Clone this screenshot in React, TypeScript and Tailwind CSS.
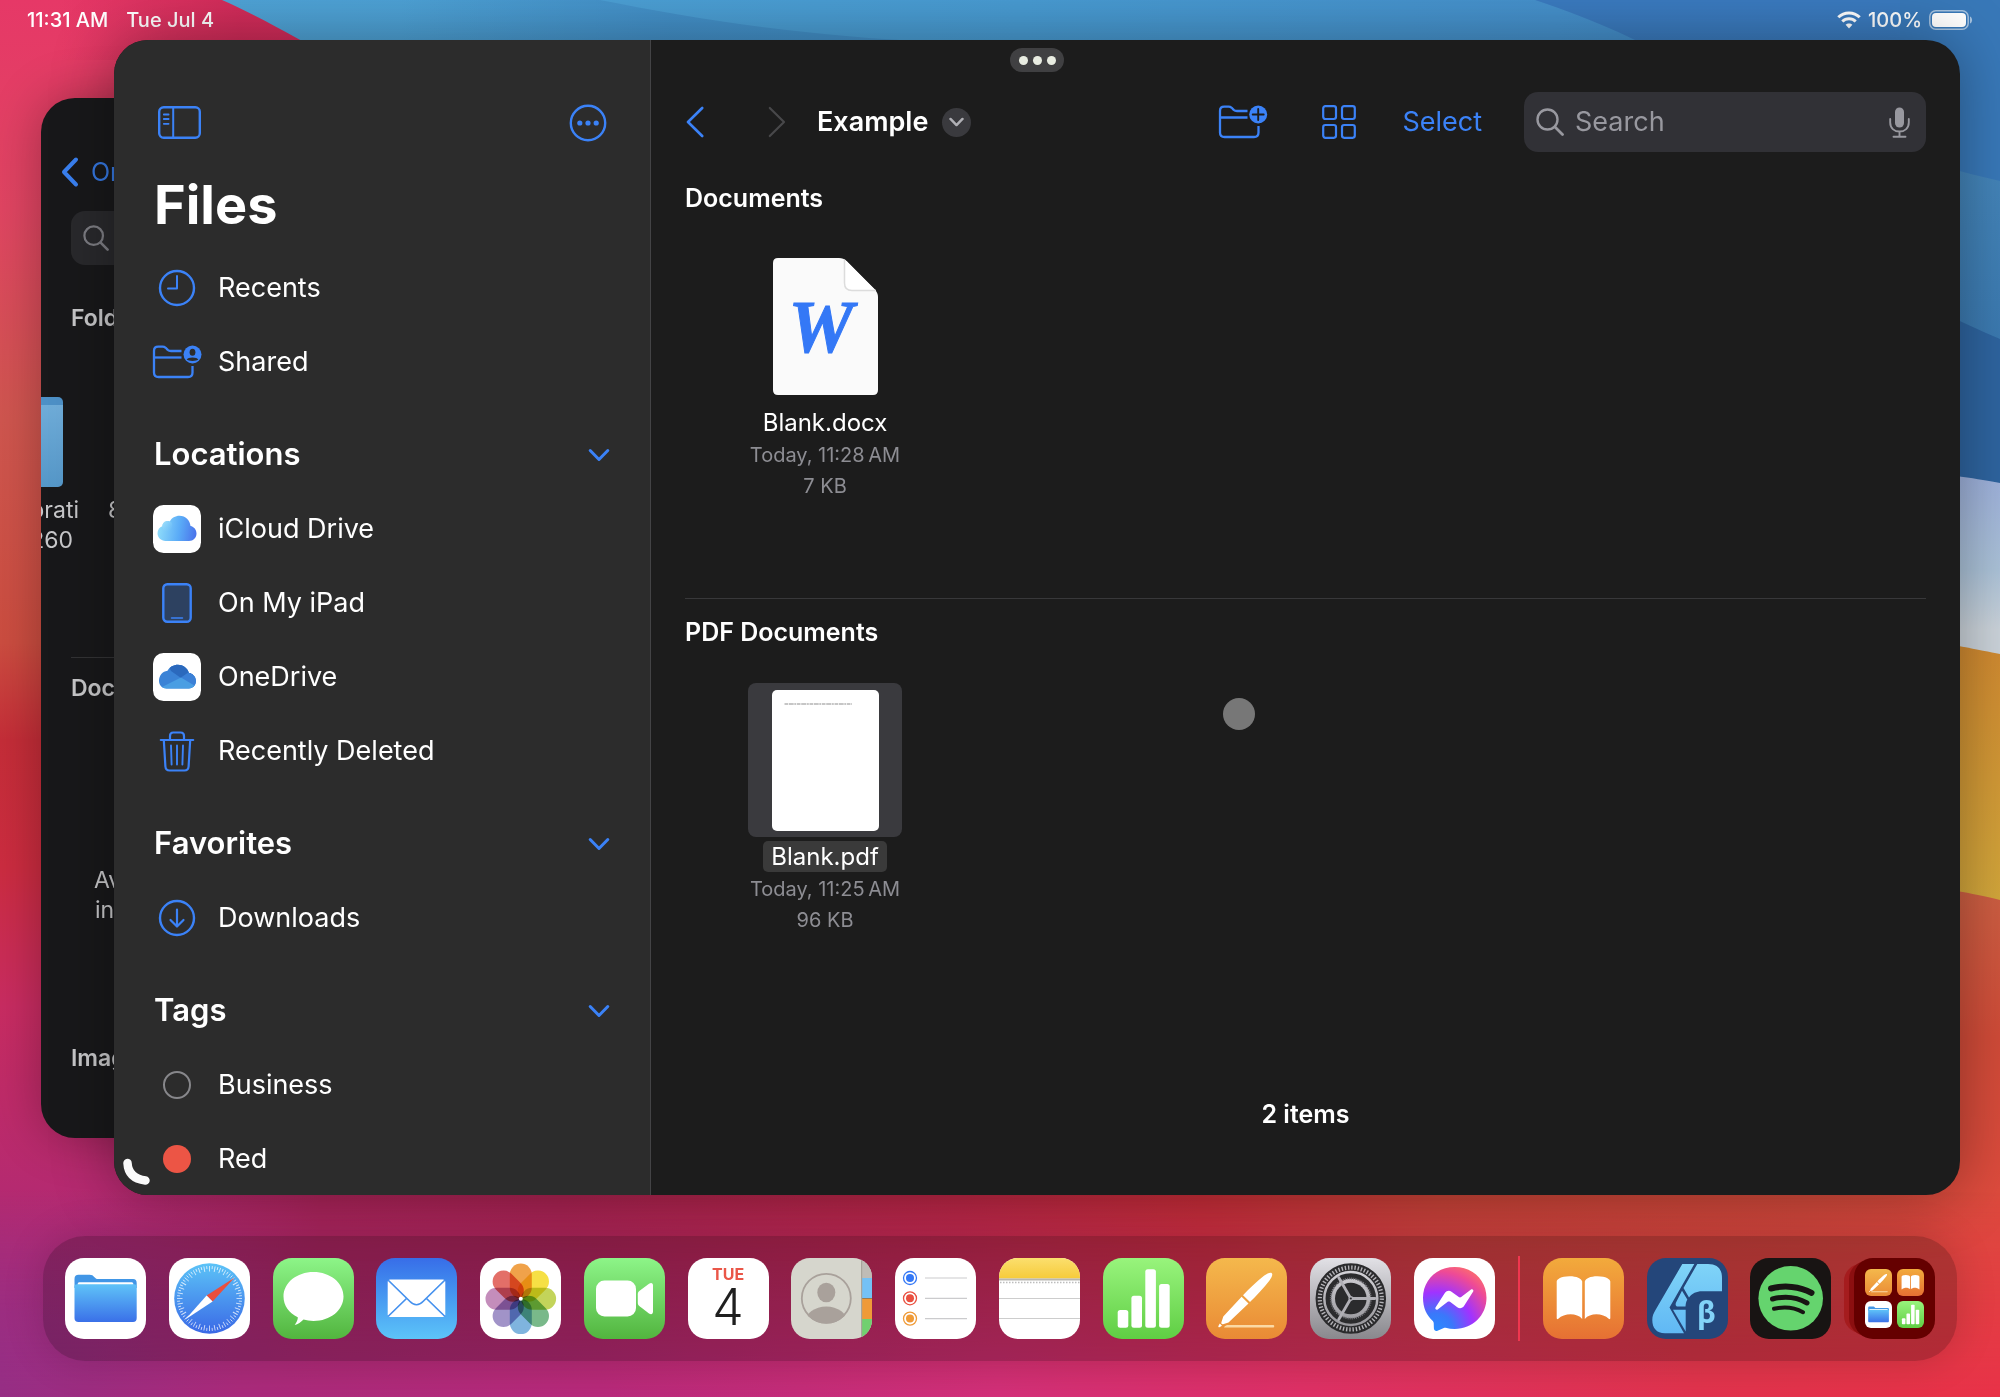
import type { ReactNode } from "react";

const BLUE = "#3b82f7";

/* ---------- Wallpaper ---------- */

function Wallpaper() {
  return (
    <svg
      className="absolute inset-0 h-full w-full"
      viewBox="0 0 2000 1397"
      preserveAspectRatio="none"
      aria-hidden="true"
    >
      <defs>
        <linearGradient id="wp-left" x1="0" y1="0" x2="0" y2="1">
          <stop offset="0" stopColor="#e63867" />
          <stop offset="0.15" stopColor="#e04562" />
          <stop offset="0.3" stopColor="#d0564f" />
          <stop offset="0.46" stopColor="#cc4d40" />
          <stop offset="0.53" stopColor="#c52d38" />
          <stop offset="0.62" stopColor="#cc2c40" />
          <stop offset="0.72" stopColor="#c92c62" />
          <stop offset="0.85" stopColor="#b52a70" />
          <stop offset="1" stopColor="#982e84" />
        </linearGradient>
        <linearGradient id="wp-rose" x1="60" y1="0" x2="240" y2="0" gradientUnits="userSpaceOnUse">
          <stop offset="0" stopColor="#cf2a58" stopOpacity="0" />
          <stop offset="1" stopColor="#cf2a58" stopOpacity="0.9" />
        </linearGradient>
        <linearGradient id="wp-mid" x1="0" y1="0" x2="1" y2="0">
          <stop offset="0" stopColor="#b52868" stopOpacity="0" />
          <stop offset="0.05" stopColor="#b52868" stopOpacity="0.1" />
          <stop offset="0.16" stopColor="#aa2458" />
          <stop offset="0.28" stopColor="#a8234f" />
          <stop offset="0.48" stopColor="#b82642" />
          <stop offset="0.6" stopColor="#c42d36" />
          <stop offset="0.72" stopColor="#c64436" />
          <stop offset="0.9" stopColor="#cf4a3a" />
          <stop offset="1" stopColor="#dd4b3d" />
        </linearGradient>
        <linearGradient id="wp-low" x1="0" y1="0" x2="1" y2="0">
          <stop offset="0" stopColor="#962e84" />
          <stop offset="0.12" stopColor="#aa2b7c" />
          <stop offset="0.3" stopColor="#b82a7c" />
          <stop offset="0.5" stopColor="#d3307a" />
          <stop offset="0.65" stopColor="#df3068" />
          <stop offset="0.85" stopColor="#e2324e" />
          <stop offset="1" stopColor="#e83248" />
        </linearGradient>
        <linearGradient id="wp-fade" x1="0" y1="0" x2="0" y2="1">
          <stop offset="0" stopColor="#000" />
          <stop offset="1" stopColor="#fff" />
        </linearGradient>
        <mask id="wp-mask">
          <rect x="0" y="1190" width="2000" height="207" fill="url(#wp-fade)" />
        </mask>
        <linearGradient id="wp-sky" x1="0" y1="0" x2="1" y2="0">
          <stop offset="0" stopColor="#4fa3d6" />
          <stop offset="0.45" stopColor="#489bd2" />
          <stop offset="0.75" stopColor="#4590cb" />
          <stop offset="1" stopColor="#3c83c2" />
        </linearGradient>
        <linearGradient id="wp-fold" x1="0" y1="0" x2="1" y2="0">
          <stop offset="0" stopColor="#3f89c2" stopOpacity="0" />
          <stop offset="0.5" stopColor="#3f89c2" stopOpacity="0.7" />
          <stop offset="1" stopColor="#3f89c2" stopOpacity="0.7" />
        </linearGradient>
        <linearGradient id="wp-deep" x1="0" y1="0" x2="0" y2="1">
          <stop offset="0" stopColor="#3a7abf" />
          <stop offset="0.4" stopColor="#3a7bbb" />
          <stop offset="1" stopColor="#2c63a0" />
        </linearGradient>
        <linearGradient id="wp-edge" x1="0" y1="0" x2="0" y2="1">
          <stop offset="0" stopColor="#4586ba" />
          <stop offset="1" stopColor="#336fa8" />
        </linearGradient>
        <linearGradient id="wp-white" x1="0" y1="0" x2="0" y2="1">
          <stop offset="0" stopColor="#9cafdb" />
          <stop offset="0.5" stopColor="#abc2d8" />
          <stop offset="0.8" stopColor="#cbd3da" />
        </linearGradient>
        <linearGradient id="wp-gold" x1="0" y1="0" x2="0" y2="1">
          <stop offset="0" stopColor="#cf8830" />
          <stop offset="1" stopColor="#d3a93c" />
        </linearGradient>
        <linearGradient id="wp-red" x1="0" y1="0" x2="0" y2="1">
          <stop offset="0" stopColor="#cc6043" />
          <stop offset="0.5" stopColor="#d04b38" />
          <stop offset="1" stopColor="#dd4b3d" />
        </linearGradient>
      </defs>
      <rect width="2000" height="1397" fill="url(#wp-left)" />
      <rect x="0" y="1190" width="2000" height="207" fill="url(#wp-mid)" />
      <rect x="0" y="1190" width="2000" height="207" fill="url(#wp-low)" mask="url(#wp-mask)" />
      <rect x="60" y="0" width="260" height="60" fill="url(#wp-rose)" />
      <path d="M222 0H2000V430H1000L340 62C300 40 255 14 222 0Z" fill="url(#wp-sky)" />
      <path d="M400 0H600C690 18 800 36 940 42H400Z" fill="url(#wp-fold)" />
      <path d="M1535 0C1600 22 1640 40 1690 70L1900 120L2000 240V0Z" fill="url(#wp-deep)" />
      <path d="M1900 0H2000V190H1900Z" fill="#3878b8" />
      <path d="M1900 150C1930 163 1960 172 2000 181V500H1900Z" fill="url(#wp-edge)" />
      <path d="M1900 290C1930 307 1960 322 2000 339V490H1900Z" fill="#2e649f" />
      <path d="M1900 468C1950 475 1980 479 2000 483V670H1900Z" fill="url(#wp-white)" />
      <path d="M1900 636C1950 644 1980 650 2000 654V920H1900Z" fill="url(#wp-gold)" />
      <path d="M1900 882C1950 889 1980 895 2000 900V1192H1900Z" fill="url(#wp-red)" />
    </svg>
  );
}

/* ---------- Line icons ---------- */

function SidebarIcon() {
  return (
    <svg className="h-[33px] w-[43px]" viewBox="0 0 43 33" fill="none" stroke={BLUE} strokeLinecap="round">
      <rect x="1.2" y="1.2" width="40.6" height="30.6" rx="4.5" strokeWidth="2.4" />
      <path d="M15.2 1.5V31.5" strokeWidth="2" />
      <path d="M5.8 8.5H10.6M5.8 13H10.6M5.8 17.8H10.6" strokeWidth="1.8" />
    </svg>
  );
}

function MoreIcon() {
  return (
    <svg className="h-[38px] w-[38px]" viewBox="0 0 38 38" fill={BLUE}>
      <circle cx="19" cy="19" r="17.2" fill="none" stroke={BLUE} strokeWidth="2.4" />
      <circle cx="10.8" cy="19" r="2.6" />
      <circle cx="19" cy="19" r="2.6" />
      <circle cx="27.2" cy="19" r="2.6" />
    </svg>
  );
}

function BadgedFolder({ children }: { children: ReactNode }) {
  return (
    <svg className="h-[36px] w-[50px] shrink-0" viewBox="0 0 50 36" fill="none" stroke={BLUE} strokeWidth="2.3" strokeLinecap="butt">
      <path d="M29.5 7H19c-1.500 0-2.300-.3-3.300-1.200l-2-2C12.700 3 12 2.700 10.600 2.700H6.200C3.300 2.700 2 4.200 2 7V28.500c0 3 1.500 4.500 4.500 4.500H36c3 0 4.500-1.500 4.500-4.500V22" />
      <path d="M2 13.500H29.500" />
      {children}
    </svg>
  );
}

function FolderPlusIcon() {
  return (
    <BadgedFolder>
      <circle cx="40.200" cy="10.500" r="9" fill={BLUE} stroke="none" />
      <path d="M40.200 5V16M34.700 10.500H45.700" stroke="#1c1c1c" strokeWidth="1.9" strokeLinecap="round" />
    </BadgedFolder>
  );
}

function SharedIcon() {
  return (
    <BadgedFolder>
      <circle cx="40.500" cy="10.500" r="9" fill={BLUE} stroke="none" />
      <ellipse cx="40.500" cy="8.200" rx="2.900" ry="3.500" fill="#2c2c2c" stroke="none" />
      <path d="M34.700 15.500C35.800 12.800 45.200 12.800 46.300 15.500C44.800 17.400 36.200 17.400 34.700 15.500Z" fill="#2c2c2c" stroke="none" />
    </BadgedFolder>
  );
}

function GridIcon() {
  return (
    <svg className="h-[34px] w-[34px]" viewBox="0 0 34 34" fill="none" stroke={BLUE} strokeWidth="2.2">
      <rect x="1.200" y="1.200" width="12.800" height="12.800" rx="2.200" />
      <rect x="20" y="1.200" width="12.800" height="12.800" rx="2.200" />
      <rect x="1.200" y="20" width="12.800" height="12.800" rx="2.200" />
      <rect x="20" y="20" width="12.800" height="12.800" rx="2.200" />
    </svg>
  );
}

function Chevron({ className, stroke, width, d }: { className: string; stroke: string; width: number; d: string }) {
  return (
    <svg className={className} viewBox="0 0 18 32" fill="none" stroke={stroke} strokeWidth={width} strokeLinecap="round" strokeLinejoin="round">
      <path d={d} />
    </svg>
  );
}

function ChevronDown({ className, stroke, width }: { className: string; stroke: string; width: number }) {
  return (
    <svg className={className} viewBox="0 0 22 14" fill="none" stroke={stroke} strokeWidth={width} strokeLinecap="round" strokeLinejoin="round">
      <path d="M2.200 2.500L11 11.500L19.800 2.500" />
    </svg>
  );
}

function SearchIcon({ className, stroke }: { className: string; stroke: string }) {
  return (
    <svg className={className} viewBox="0 0 28 28" fill="none" stroke={stroke} strokeWidth="2.4" strokeLinecap="round">
      <circle cx="11.500" cy="11.500" r="10" />
      <path d="M19 19L26.500 26.500" strokeWidth="2.800" />
    </svg>
  );
}

function MicIcon() {
  return (
    <svg className="h-[31px] w-[21px]" viewBox="0 0 21 31" fill="none" stroke="#98989f" strokeWidth="1.900" strokeLinecap="round">
      <rect x="6" y="0.500" width="9" height="20" rx="4.500" fill="#98989f" stroke="none" />
      <path d="M1.200 12V15.500C1.200 21 5 24.500 10.500 24.500S19.800 21 19.800 15.500V12M10.500 24.500V29.500M4.500 29.700H16.500" />
    </svg>
  );
}

function ClockIcon() {
  return (
    <svg className="h-[38px] w-[38px]" viewBox="0 0 38 38" fill="none" stroke={BLUE} strokeLinecap="round" strokeLinejoin="round">
      <circle cx="19" cy="19" r="17" strokeWidth="2.400" />
      <path d="M19 7V19.500H10" strokeWidth="2" />
    </svg>
  );
}

function DownloadIcon() {
  return (
    <svg className="h-[38px] w-[38px]" viewBox="0 0 38 38" fill="none" stroke={BLUE} strokeLinecap="round" strokeLinejoin="round">
      <circle cx="19" cy="19" r="17" strokeWidth="2.400" />
      <path d="M19 10.500V27M12.500 21L19 27.500L25.500 21" strokeWidth="2.200" />
    </svg>
  );
}

function TabletIcon() {
  return (
    <svg className="h-[40px] w-[30px]" viewBox="0 0 30 40" fill="none" stroke={BLUE}>
      <rect x="1.300" y="1.300" width="27.400" height="37.400" rx="4" fill="#2d4160" strokeWidth="2.400" />
      <path d="M9.500 35H20.500" strokeWidth="1.500" strokeLinecap="round" />
    </svg>
  );
}

function TrashIcon() {
  return (
    <svg className="h-[41px] w-[36px]" viewBox="0 0 36 41" fill="none" stroke={BLUE} strokeWidth="2.200" strokeLinecap="round">
      <path d="M1.800 9H34.200M11 9V5C11 2.800 12.200 1.500 14.300 1.500H21.700C23.800 1.500 25 2.800 25 5V9" />
      <path d="M4.800 9L6.400 35.500C6.600 38 8 39.500 10.500 39.500H25.500C28 39.500 29.400 38 29.600 35.500L31.200 9" />
      <path d="M12 14.500L12.600 33.500M18 14.500V33.500M24 14.500L23.400 33.500" strokeWidth="1.900" />
    </svg>
  );
}

function CloudTile() {
  return (
    <svg className="h-12 w-12" viewBox="0 0 48 48">
      <defs>
        <linearGradient id="icloud" x1="0" y1="0.600" x2="1" y2="0.700">
          <stop offset="0" stopColor="#8fdcfa" />
          <stop offset="0.550" stopColor="#5aabf7" />
          <stop offset="1" stopColor="#4a72ea" />
        </linearGradient>
        <linearGradient id="icloud-puff" x1="0" y1="0" x2="1" y2="1">
          <stop offset="0" stopColor="#a5e2fb" />
          <stop offset="1" stopColor="#6fc0f8" stopOpacity="0" />
        </linearGradient>
      </defs>
      <rect width="48" height="48" rx="10.500" fill="#fff" />
      <path d="M12.500 36C8 36 4.500 32.500 4.500 28.300C4.500 24.800 6.500 22.200 9.300 21.200C9.500 17.600 13 15 16.800 16.400C18.600 13 22.300 10.800 26.500 10.800C32.500 10.800 37 15.300 37.500 21C41 21.700 43.500 24.800 43.500 28.500C43.500 32.600 40.300 36 36 36Z" fill="url(#icloud)" />
      <path d="M9.300 21.200C9.500 17 14 14.500 18 17C20.500 19 19 24 16 26C13 27 9.500 25 9.300 21.200Z" fill="url(#icloud-puff)" />
    </svg>
  );
}

function OneDriveTile() {
  return (
    <svg className="h-12 w-12" viewBox="0 0 48 48">
      <defs>
        <clipPath id="od-clip">
          <path d="M13.500 35.500C9.500 35.500 6 32.500 6 28C6 22.500 9.500 18.500 14.500 17.800C16.500 14 20.500 11.800 25 11.800C30 11.800 34.500 15 36 20C40 20.500 43 24 43 28C43 32.500 39.500 35.500 36 35.500Z" />
        </clipPath>
      </defs>
      <rect width="48" height="48" rx="10.500" fill="#fff" />
      <g clipPath="url(#od-clip)">
        <rect width="48" height="48" fill="#3b83d6" />
        <path d="M14 10H40V22L28 25L18 18Z" fill="#2b69bd" />
        <path d="M28 24.500L36 19L46 22V38Z" fill="#3b80d6" />
        <path d="M5 36L28 24.500L44 34L38 38H6Z" fill="#4a9ee3" />
      </g>
    </svg>
  );
}

function WifiIcon() {
  return (
    <svg className="h-[18px] w-[24px]" viewBox="0 0 24 18" fill="none" stroke="#fff" strokeWidth="3">
      <path d="M1.300 6.300C7.200 0.400 16.800 0.400 22.700 6.300" />
      <path d="M5.300 10.500C9 6.900 15 6.900 18.700 10.500" />
      <path d="M12 17.500L8.600 13.800C10.500 12 13.500 12 15.400 13.800Z" fill="#fff" stroke="none" />
    </svg>
  );
}

function BatteryIcon() {
  return (
    <svg className="h-5 w-[44px]" viewBox="0 0 44 20">
      <rect x="0.800" y="0.800" width="38.400" height="18.400" rx="6" fill="none" stroke="#fff" strokeOpacity="0.550" strokeWidth="1.500" />
      <rect x="3" y="3" width="34" height="14" rx="4" fill="#fff" />
      <path d="M41 6.500C43.800 7.500 43.800 12.500 41 13.500Z" fill="#fff" fillOpacity="0.550" />
    </svg>
  );
}

/* ---------- Dock artwork (81 x 81 tiles) ---------- */

function Art({ children }: { children: ReactNode }) {
  return (
    <svg className="block h-full w-full" viewBox="0 0 81 81" fill="none">
      {children}
    </svg>
  );
}

const FilesArt = () => (
  <Art>
    <defs>
      <linearGradient id="files-front" x1="0" y1="0" x2="0" y2="1">
        <stop offset="0" stopColor="#5fc3f8" />
        <stop offset="1" stopColor="#3a70e8" />
      </linearGradient>
    </defs>
    <path d="M9.500 27V21C9.500 18 11 16.700 13.500 16.700H24.500C27 16.700 28 17.500 29.500 19.200C30.700 20.500 31.500 21 33.500 21H68C70.500 21 71.700 22.500 71.700 25V30H9.500Z" fill="#4196e6" />
    <rect x="12.700" y="24.300" width="55.600" height="4" rx="1.500" fill="#fff" />
    <path d="M9.500 28.500C9.500 27 10.500 26.300 12 26.300H69C70.700 26.300 71.700 27 71.700 28.500V60C71.700 62.800 70.500 64 68 64H13.500C10.800 64 9.500 62.800 9.500 60Z" fill="url(#files-front)" />
  </Art>
);

const SafariArt = () => (
  <Art>
    <defs>
      <linearGradient id="safari" x1="0" y1="0" x2="0" y2="1">
        <stop offset="0" stopColor="#5cc3f7" />
        <stop offset="1" stopColor="#3a69e6" />
      </linearGradient>
    </defs>
    <circle cx="40.500" cy="40.500" r="35.300" fill="url(#safari)" />
    {Array.from({ length: 72 }, (_, i) => (
      <path
        key={i}
        d={i % 2 ? "M40.500 8V11" : "M40.500 8V13.500"}
        stroke="#fff"
        strokeOpacity="0.750"
        strokeWidth="0.900"
        transform={`rotate(${i * 5} 40.500 40.500)`}
      />
    ))}
    <path d="M65.700 19.500L43.600 43.600L37.600 37.600Z" fill="#ea4f3d" />
    <path d="M16.300 61.500L37.600 37.600L43.600 43.600Z" fill="#fff" />
  </Art>
);

const MessagesArt = () => (
  <Art>
    <path d="M40.500 14C57.200 14 70.500 24.800 70.500 38.500S57.200 63 40.500 63C37 63 33.500 62.500 30.500 61.600C28 64 25 66.500 21.700 67C23.600 64.500 25 61.500 24.800 59.200C16 55 10.500 47.500 10.500 38.500C10.500 24.800 23.800 14 40.500 14Z" fill="#fff" />
  </Art>
);

const MailArt = () => (
  <Art>
    <rect x="11.700" y="21.500" width="57.600" height="37.500" rx="2.500" fill="#fff" />
    <g stroke="#4591ee" strokeWidth="1.700">
      <path d="M12 22L34 43.500C38 47.800 43 47.800 47 43.500L69 22" />
      <path d="M12 58.500L30.500 40.500M69 58.500L50.500 40.500" />
    </g>
  </Art>
);

const PETALS = ["#f0a24a", "#f6e045", "#c3d45a", "#79b98a", "#7fb4de", "#a193c8", "#c48dbb", "#e36f68"];

const PhotosArt = () => (
  <Art>
    {PETALS.map((fill, i) => (
      <rect
        key={fill}
        x="29.800"
        y="5.500"
        width="22"
        height="35"
        rx="11"
        fill={fill}
        className="mix-blend-multiply"
        transform={`rotate(${i * 45} 40.800 40.800)`}
      />
    ))}
    <circle cx="40.800" cy="40.800" r="2" fill="#fff" />
  </Art>
);

const FaceTimeArt = () => (
  <Art>
    <rect x="12" y="22.500" width="40" height="36" rx="8.500" fill="#fff" />
    <path d="M53.800 36.500C53.800 34.500 54.200 33.800 55.600 32.700L65 25.800C67.200 24.200 69 25 69 27.500V53.500C69 56 67.200 57 65 55.400L55.600 48.300C54.200 47.200 53.800 46.500 53.800 44.500Z" fill="#fff" />
  </Art>
);

const ContactsArt = () => (
  <Art>
    <defs>
      <clipPath id="contact-clip">
        <circle cx="35.300" cy="40.300" r="25.300" />
      </clipPath>
    </defs>
    <rect x="71" width="10" height="20" fill="#bfbcb6" />
    <rect x="71" y="20" width="10" height="20" fill="#74c1f5" />
    <rect x="71" y="40" width="10" height="1.500" fill="#9a7a50" />
    <rect x="71" y="41" width="10" height="20" fill="#ef9a38" />
    <rect x="71" y="61" width="10" height="20" fill="#71d070" />
    <rect x="70" width="1.200" height="81" fill="#a8a59c" />
    <circle cx="35.300" cy="40.300" r="24.500" stroke="#a9a19b" strokeWidth="1.800" />
    <ellipse cx="35.300" cy="34.500" rx="9" ry="9.800" fill="#a9a19b" />
    <ellipse cx="35.300" cy="64" rx="21" ry="15.500" fill="#a9a19b" clipPath="url(#contact-clip)" />
  </Art>
);

const RemindersArt = () => (
  <Art>
    {["#3478f6", "#e9503f", "#ef9a37"].map((c, i) => (
      <g key={c}>
        <circle cx="15" cy={20 + i * 20.3} r="6.500" stroke={c} strokeWidth="1.300" />
        <circle cx="15" cy={20 + i * 20.3} r="4" fill={c} />
        <path d={["M30 20H72", "M30 40.300H72", "M30 60.600H72"][i]} stroke="#cbcbcd" strokeWidth="1.200" />
      </g>
    ))}
  </Art>
);

const NotesArt = () => (
  <Art>
    <defs>
      <linearGradient id="notes" x1="0" y1="0" x2="0" y2="1">
        <stop offset="0" stopColor="#fbdf6e" />
        <stop offset="1" stopColor="#f6cb3a" />
      </linearGradient>
    </defs>
    <rect width="81" height="20.500" fill="url(#notes)" />
    <rect y="20.500" width="81" height="2" fill="#b8b6b0" />
    <path d="M1 24.500H81" stroke="#bdbdbd" strokeWidth="1.500" strokeDasharray="1.500 1.500" />
    <path d="M0 40.500H81M0 60.500H81" stroke="#cdcdcd" strokeWidth="1.200" />
  </Art>
);

const NumbersArt = () => (
  <Art>
    <g fill="#fff">
      <rect x="14.700" y="52" width="10.600" height="17.700" rx="2.500" />
      <rect x="28.400" y="37.700" width="10.600" height="32" rx="2.500" />
      <rect x="42.300" y="11.300" width="10.600" height="58.400" rx="2.500" />
      <rect x="56.100" y="26" width="10.600" height="43.700" rx="2.500" />
    </g>
  </Art>
);

const PagesArt = () => (
  <Art>
    <path d="M21 67H67.500Q69 68 67.500 69.500H18Q18 68 21 67Z" fill="#fbd9a4" />
    <path d="M65.800 15.200C67 16.500 65.800 19.500 63.500 22.500C58 29.800 50.500 37.500 44 44L37 37.300C43.500 30.500 51 23 58.300 17.500C61.500 15.200 64.500 14 65.800 15.200Z" fill="#fff" />
    <path d="M35.600 38.800L42.500 45.500L22.500 64.500L17 66.300C15.800 66.500 15 65.500 15.400 64.300L17.300 58.500Z" fill="#fff" />
    <path d="M13.800 65.500L16 67.700L13.500 69.200C12.700 69.500 12 68.700 12.400 68Z" fill="#fff" />
  </Art>
);

const SettingsArt = () => (
  <Art>
    <circle cx="40.800" cy="40.500" r="31.500" stroke="#2b2b2d" strokeWidth="7.500" />
    <circle cx="40.800" cy="40.500" r="31" stroke="#b4b3b8" strokeWidth="4.200" strokeDasharray="1.400 1.850" />
    <circle cx="40.800" cy="40.500" r="22.500" stroke="#2b2b2d" strokeWidth="5.500" />
    <circle cx="40.800" cy="40.500" r="20" stroke="#77767b" strokeWidth="2" strokeDasharray="1 1.090" />
    <circle cx="40.800" cy="40.500" r="15.800" fill="#2b2b2d" />
    <g stroke="#b0afb5" strokeLinecap="round">
      <path d="M40.800 40.500H65M40.800 40.500L28.700 19.500M40.800 40.500L28.700 61.500" strokeWidth="2.800" />
    </g>
    <circle cx="40.800" cy="40.500" r="2.400" fill="#b0afb5" />
    <circle cx="40.800" cy="40.500" r="1.100" fill="#2b2b2d" />
  </Art>
);

const MessengerArt = () => (
  <Art>
    <defs>
      <radialGradient id="messenger" cx="0.200" cy="1" r="1.100">
        <stop offset="0" stopColor="#2a8cff" />
        <stop offset="0.250" stopColor="#3a78fa" />
        <stop offset="0.550" stopColor="#a033ff" />
        <stop offset="0.850" stopColor="#ee4a96" />
        <stop offset="1" stopColor="#fb6a70" />
      </radialGradient>
    </defs>
    <path d="M40.700 9C58.500 9 72.500 22 72.500 39.800S58.500 71 40.700 71C37.500 71 34.500 70.600 31.700 69.800C31 69.600 30.400 69.700 29.800 70L23.500 72.700C21.700 73.500 20 72.200 19.900 70.500L19.700 65C19.700 64.200 19.300 63.500 18.800 63C12.500 57.500 9 49.500 9 39.800C9 22 23 9 40.700 9Z" fill="url(#messenger)" />
    <path d="M21.500 49.500L31 34.800C32.500 32.500 35.500 32 37.500 33.700L44.800 39C45.500 39.500 46.500 39.500 47.200 39L57 31.500C58.400 30.500 60 32 59.200 33.500L50 48C48.500 50.300 45.500 50.900 43.300 49.200L36 43.800C35.300 43.300 34.400 43.300 33.700 43.800L23.700 51.400C22.400 52.300 20.700 51 21.500 49.500Z" fill="#fff" />
  </Art>
);

const BooksArt = () => (
  <Art>
    <g fill="#fff">
      <path d="M39.200 23.500V61C34 54.500 21 55 15.300 60.800C14.300 61.500 13.700 61 13.700 60V23.500C13.700 21.500 18 18.300 26.500 18.300C34 18.300 38 20.500 39.200 23.500Z" />
      <path d="M41.800 23.500V61C47 54.500 60 55 65.700 60.800C66.700 61.500 67.300 61 67.300 60V23.500C67.300 21.500 63 18.300 54.500 18.300C47 18.300 43 20.500 41.800 23.500Z" />
    </g>
  </Art>
);

const AffinityArt = () => (
  <Art>
    <defs>
      <linearGradient id="affinity" x1="0" y1="0" x2="0" y2="81" gradientUnits="userSpaceOnUse">
        <stop offset="0" stopColor="#82d6f8" />
        <stop offset="1" stopColor="#5eb6f4" />
      </linearGradient>
    </defs>
    <g fill="url(#affinity)">
      <path d="M35.300 6H47.300L22.500 49.500L37 75.200H18C9.500 75.200 5.300 70 5.300 62C5.300 58 6.500 55.500 8.500 52Z" />
      <path d="M50.300 6H61C70.500 6 75 11 75 20V33.300H55C49.500 33.300 45 35.500 42 39.500L36.500 30Z" />
      <path d="M35 32.700L40.300 41.500C39 44 38.700 46 38.500 48.500H31C28.500 48.500 28.300 46.500 29 44.500Z" />
      <path d="M26 51.700H38.700V73.500Z" />
    </g>
    <text x="50" y="65" fontSize="30" fontWeight="700" fontFamily="Noto Sans, sans-serif" fill="#82d3f8">
      β
    </text>
  </Art>
);

const SpotifyArt = () => (
  <Art>
    <circle cx="40.700" cy="40.300" r="32.300" fill="#65d46e" />
    <g stroke="#181413" strokeLinecap="round">
      <path d="M21 30.500C34 27 50 28.300 61.500 34.800" strokeWidth="6" />
      <path d="M22.500 41C34.500 37.800 47 39.200 57 45" strokeWidth="5" />
      <path d="M24 50.800C34.500 48.300 44.500 49.500 53 54.200" strokeWidth="4" />
    </g>
  </Art>
);

function CalendarArt() {
  return (
    <span className="flex h-full flex-col items-center pt-1.5">
      <span className="text-base leading-5 font-bold text-[#ea5648]">TUE</span>
      <span className="text-[50px] leading-[46px] font-light text-[#1f1f1f]">4</span>
    </span>
  );
}

type DockApp = { name: string; tile: string; art: ReactNode };

const FILES: DockApp = { name: "Files", tile: "bg-white", art: <FilesArt /> };
const NUMBERS: DockApp = { name: "Numbers", tile: "bg-linear-to-b from-[#98f47c] to-[#5fce43]", art: <NumbersArt /> };
const PAGES: DockApp = { name: "Pages", tile: "bg-linear-to-b from-[#f4b84c] to-[#e98a35]", art: <PagesArt /> };
const BOOKS: DockApp = { name: "Books", tile: "bg-linear-to-b from-[#f2aa3c] to-[#e67033]", art: <BooksArt /> };

const PINNED: DockApp[] = [
  FILES,
  { name: "Safari", tile: "bg-white", art: <SafariArt /> },
  { name: "Messages", tile: "bg-linear-to-b from-[#8df588] to-[#52b53e]", art: <MessagesArt /> },
  { name: "Mail", tile: "bg-linear-to-b from-[#386de8] to-[#5dc4f8]", art: <MailArt /> },
  { name: "Photos", tile: "bg-white", art: <PhotosArt /> },
  { name: "FaceTime", tile: "bg-linear-to-b from-[#8df588] to-[#52b53e]", art: <FaceTimeArt /> },
  { name: "Calendar", tile: "bg-white", art: <CalendarArt /> },
  { name: "Contacts", tile: "bg-[#d6d6cd]", art: <ContactsArt /> },
  { name: "Reminders", tile: "bg-white", art: <RemindersArt /> },
  { name: "Notes", tile: "bg-white", art: <NotesArt /> },
  NUMBERS,
  PAGES,
  { name: "Settings", tile: "bg-linear-to-b from-[#e2e1e6] to-[#89888d]", art: <SettingsArt /> },
  { name: "Messenger", tile: "bg-white", art: <MessengerArt /> },
];

const RECENT: DockApp[] = [
  BOOKS,
  { name: "Affinity Designer", tile: "bg-[#24467a]", art: <AffinityArt /> },
  { name: "Spotify", tile: "bg-[#181413]", art: <SpotifyArt /> },
];

function DockIcon({ app }: { app: DockApp }) {
  return (
    <button type="button" aria-label={app.name} className={`h-[81px] w-[81px] shrink-0 overflow-hidden rounded-[19px] ${app.tile}`}>
      {app.art}
    </button>
  );
}

function Dock() {
  return (
    <nav aria-label="Dock" className="relative mx-auto mt-[41px] mb-9 flex h-[125px] w-fit items-center rounded-[42px] bg-black/22 px-[22px] shadow-[0_0_40px_rgba(0,0,0,0.16)]">
      <div className="flex w-[1430px] justify-between">
        {PINNED.map((app) => (
          <DockIcon key={app.name} app={app} />
        ))}
      </div>
      <div className="mr-[23px] ml-[23px] h-[85px] w-0.5 bg-[#f0364f]" />
      <div className="flex w-[392px] justify-between">
        {RECENT.map((app) => (
          <DockIcon key={app.name} app={app} />
        ))}
        <button type="button" aria-label="App Library" className="relative h-[81px] w-[81px] shrink-0">
          <span className="absolute top-1.5 -left-2.5 h-[69px] w-10 rounded-[17px] bg-[#a51c1e]" />
          <span className="absolute top-[3px] -left-[5px] h-[75px] w-10 rounded-[18px] bg-[#8c0f10]" />
          <span className="relative grid h-full grid-cols-2 place-content-center justify-center gap-[5px] rounded-[19px] bg-[#650000] px-[11px]">
            {[PAGES, BOOKS, FILES, NUMBERS].map((app) => (
              <span key={app.name} className={`h-[27px] w-[27px] overflow-hidden rounded-md ${app.tile}`}>
                {app.art}
              </span>
            ))}
          </span>
        </button>
      </div>
    </nav>
  );
}

/* ---------- Sidebar ---------- */

function SidebarRow({ icon, label }: { icon: ReactNode; label: string }) {
  return (
    <li>
      <a href="#" className="flex h-[74px] items-center gap-[17px] text-[27px]">
        <span className="flex w-12 shrink-0 justify-center">{icon}</span>
        {label}
      </a>
    </li>
  );
}

function SidebarGroup({ title, children }: { title: string; children: ReactNode }) {
  return (
    <section>
      <button type="button" className="flex h-[93px] w-full items-center justify-between pt-[18px] pl-px text-[31px] font-semibold">
        {title}
        <ChevronDown className="h-[14px] w-[22px]" stroke={BLUE} width={3} />
      </button>
      <ul>{children}</ul>
    </section>
  );
}

function Sidebar() {
  return (
    <aside className="flex w-[537px] shrink-0 flex-col border-r border-[#434345] bg-[#2c2c2c] pt-[52px] pr-10 pl-[39px] text-white">
      <div className="flex h-[61px] items-center justify-between pr-[3px] pl-[5px]">
        <button type="button" aria-label="Toggle sidebar"><SidebarIcon /></button>
        <button type="button" aria-label="More"><MoreIcon /></button>
      </div>
      <h1 className="mt-5 mb-3.5 pl-px text-[54px] leading-[64px] font-bold">Files</h1>
      <div className="-mb-2">
        <ul>
          <SidebarRow icon={<ClockIcon />} label="Recents" />
          <SidebarRow icon={<SharedIcon />} label="Shared" />
        </ul>
        <SidebarGroup title="Locations">
          <SidebarRow icon={<CloudTile />} label="iCloud Drive" />
          <SidebarRow icon={<TabletIcon />} label="On My iPad" />
          <SidebarRow icon={<OneDriveTile />} label="OneDrive" />
          <SidebarRow icon={<TrashIcon />} label="Recently Deleted" />
        </SidebarGroup>
        <SidebarGroup title="Favorites">
          <SidebarRow icon={<DownloadIcon />} label="Downloads" />
        </SidebarGroup>
        <SidebarGroup title="Tags">
          <SidebarRow icon={<span className="h-7 w-7 rounded-full border-2 border-[#87878b]" />} label="Business" />
          <SidebarRow icon={<span className="h-7 w-7 rounded-full bg-[#ec5545]" />} label="Red" />
        </SidebarGroup>
      </div>
    </aside>
  );
}

/* ---------- Content ---------- */

function Toolbar() {
  return (
    <header className="flex h-[60px] items-center">
      <button type="button" aria-label="Back" className="ml-px">
        <Chevron className="h-8 w-[18px]" stroke={BLUE} width={2.6} d="M16.200 2L2 16L16.200 30" />
      </button>
      <button type="button" aria-label="Forward" className="ml-16">
        <Chevron className="h-8 w-[18px]" stroke="#48484a" width={2.2} d="M1.800 2L16 16L1.800 30" />
      </button>
      <button type="button" className="ml-[31px] flex items-center gap-3.5">
        <span className="text-[27px] font-semibold text-white">Example</span>
        <span className="flex h-[29px] w-[29px] items-center justify-center rounded-full bg-[#3a3a3e]">
          <ChevronDown className="h-[10px] w-[15px]" stroke="#b0b0b5" width={3.6} />
        </span>
      </button>
      <button type="button" aria-label="New folder" className="ml-auto"><FolderPlusIcon /></button>
      <button type="button" aria-label="View options" className="ml-[54px]"><GridIcon /></button>
      <button type="button" className="ml-[46px] text-[27px] text-[#3b82f7]">Select</button>
      <label className="ml-[42px] flex h-[60px] w-[402px] items-center gap-[11px] rounded-[14px] bg-[#313136] pr-4 pl-3">
        <SearchIcon className="h-7 w-7 shrink-0" stroke="#98989f" />
        <input type="text" aria-label="Search" placeholder="Search" className="min-w-0 flex-1 bg-transparent text-[27px] text-white outline-none placeholder:text-[#98989f]" />
        <MicIcon />
      </label>
    </header>
  );
}

function WordDocument() {
  return (
    <svg className="h-[137px] w-[105px]" viewBox="0 0 105 137">
      <path d="M5 0H66C69 0 71.500 1 73.500 3L102 32C104 34 105 36 105 39V132Q105 137 100 137H5Q0 137 0 132V5Q0 0 5 0Z" fill="#fafafa" />
      <path d="M71.500 1.500V25C71.500 30 74 32.500 79 32.500H103L74 3.500Z" fill="#fff" />
      <path d="M71.500 1.500V25C71.500 30 74 32.500 79 32.500H103" fill="none" stroke="#dcdcdc" strokeWidth="1.500" />
      <text x="48" y="94" textAnchor="middle" fontFamily="Liberation Serif, serif" fontSize="73" fontWeight="700" fontStyle="italic" fill="#3478f6" stroke="#3478f6" strokeWidth="1">
        W
      </text>
    </svg>
  );
}

function PdfPage() {
  return (
    <span className="block h-[141px] w-[107px] rounded-[5px] bg-white pt-3 pl-3">
      <svg className="block h-1 w-[70px]" viewBox="0 0 70 4" aria-hidden="true">
        <path d="M0.500 2H68" stroke="#8e8e8e" strokeWidth="1.200" strokeDasharray="3.500 0.700 5 0.600 2 0.700" />
      </svg>
    </span>
  );
}

type FileItem = { name: string; date: string; size: string; preview: ReactNode; selected?: boolean };

function FileCard({ name, date, size, preview, selected }: FileItem) {
  return (
    <button type="button" aria-pressed={!!selected} className="mt-[35px] ml-[63px] flex w-[154px] flex-col items-center text-xl leading-[31px] text-[#8d8d93]">
      <span className={`flex h-[154px] w-full items-center justify-center rounded-lg ${selected ? "bg-[#3a3a3e]" : ""}`}>{preview}</span>
      <span className={`mt-1 mb-0.5 rounded-[5px] px-2 text-2xl leading-[31px] text-white ${selected ? "bg-[#3a3a3a]" : ""}`}>{name}</span>
      <span className="whitespace-nowrap">{date}</span>
      <span>{size}</span>
    </button>
  );
}

function FileSection({ title, children }: { title: string; children: ReactNode }) {
  return (
    <section>
      <h2 className="text-[25px] leading-8 font-semibold text-white">{title}</h2>
      {children}
    </section>
  );
}

function FilesWindow() {
  return (
    <div className="relative flex flex-1 overflow-hidden rounded-[34px] bg-[#1c1c1c] shadow-[0_0_60px_rgba(0,0,0,0.35)]">
      <Sidebar />
      <main className="relative flex min-w-0 flex-1 flex-col pt-[52px] pr-[34px] pb-[65px] pl-[34px]">
        <Toolbar />
        <div className="mt-[30px] border-b border-[#38383a] pb-24">
          <FileSection title="Documents">
            <FileCard name="Blank.docx" date={"Today, 11:28\u2009AM"} size="7 KB" preview={<WordDocument />} />
          </FileSection>
        </div>
        <div className="mt-[17px]">
          <FileSection title="PDF Documents">
            <FileCard name="Blank.pdf" date={"Today, 11:25\u2009AM"} size="96 KB" preview={<PdfPage />} selected />
          </FileSection>
        </div>
        <p className="mt-auto text-center text-[25px] leading-8 font-semibold text-white">2 items</p>
        <span className="absolute top-[658px] left-[572px] h-8 w-8 rounded-full bg-[#777]" aria-hidden="true" />
      </main>
      <button type="button" aria-label="Window controls" className="absolute top-2 left-1/2 flex h-6 w-[54px] -translate-x-1/2 items-center justify-center gap-[5px] rounded-full bg-[#404042]">
        <span className="h-[9px] w-[9px] rounded-full bg-[#e9ede2]" />
        <span className="h-[9px] w-[9px] rounded-full bg-[#e9ede2]" />
        <span className="h-[9px] w-[9px] rounded-full bg-[#e9ede2]" />
      </button>
      <svg className="absolute bottom-1.5 left-2 h-8 w-8" viewBox="0 0 32 32" fill="none" aria-hidden="true">
        <path d="M5.500 6C6 15.500 11.500 22 23.500 23.500" stroke="#fafafa" strokeWidth="8.500" strokeLinecap="round" />
      </svg>
    </div>
  );
}

/* ---------- Window partly hidden behind the front one ---------- */

function BackWindow() {
  return (
    <div className="absolute top-[58px] bottom-[57px] left-[41px] w-60 overflow-hidden rounded-[34px] bg-[#18181a] text-[23px] leading-[30px] text-[#c8c8ca] shadow-[0_0_50px_rgba(0,0,0,0.3)]" aria-hidden="true">
      <div className="mt-[58px] flex h-8 items-center gap-3 pl-5 text-[25px] text-[#3577e0]">
        <Chevron className="h-8 w-[18px]" stroke="#3a80f0" width={4} d="M15 3.500L3 16L15 28.500" />
        On
      </div>
      <div className="mt-[23px] ml-[30px] flex h-[54px] items-center rounded-[14px] bg-[#29292c] pl-3">
        <SearchIcon className="h-[26px] w-[26px]" stroke="#7d7d83" />
      </div>
      <div className="mt-[38px] ml-[30px] font-semibold">Fold</div>
      <div className="mt-[64px] h-[90px] w-[22px] rounded-r-[5px] border-t-8 border-[#4d90c6] bg-linear-to-b from-[#6facd8] to-[#5597c8]" />
      <div className="mt-2 flex">
        <div className="flex w-[38px] flex-col items-end">
          <span>orati</span>
          <span className="pr-1.5">260</span>
        </div>
        <span className="ml-[29px]">8</span>
      </div>
      <div className="mt-[102px] ml-[30px] border-t border-[#333335] pt-[15px] font-semibold">Doc</div>
      <div className="mt-[162px] ml-[53px]">Av</div>
      <div className="ml-[54px]">in</div>
      <div className="mt-[118px] ml-[30px] font-semibold">Imag</div>
    </div>
  );
}

function StatusBar() {
  return (
    <div className="relative flex h-10 items-center justify-between px-[27px] text-xl font-medium text-white">
      <div className="flex gap-[18px]">
        <span>11:31 AM</span>
        <span>Tue Jul 4</span>
      </div>
      <div className="flex items-center gap-[7px]">
        <WifiIcon />
        <span>100%</span>
        <BatteryIcon />
      </div>
    </div>
  );
}

export default function App() {
  return (
    <div className="relative flex min-h-screen flex-col overflow-hidden bg-[#b82a6c] font-['Inter','Noto_Sans',sans-serif]">
      <Wallpaper />
      <StatusBar />
      <div className="relative flex flex-1 pr-10 pl-[114px]">
        <BackWindow />
        <FilesWindow />
      </div>
      <Dock />
    </div>
  );
}
